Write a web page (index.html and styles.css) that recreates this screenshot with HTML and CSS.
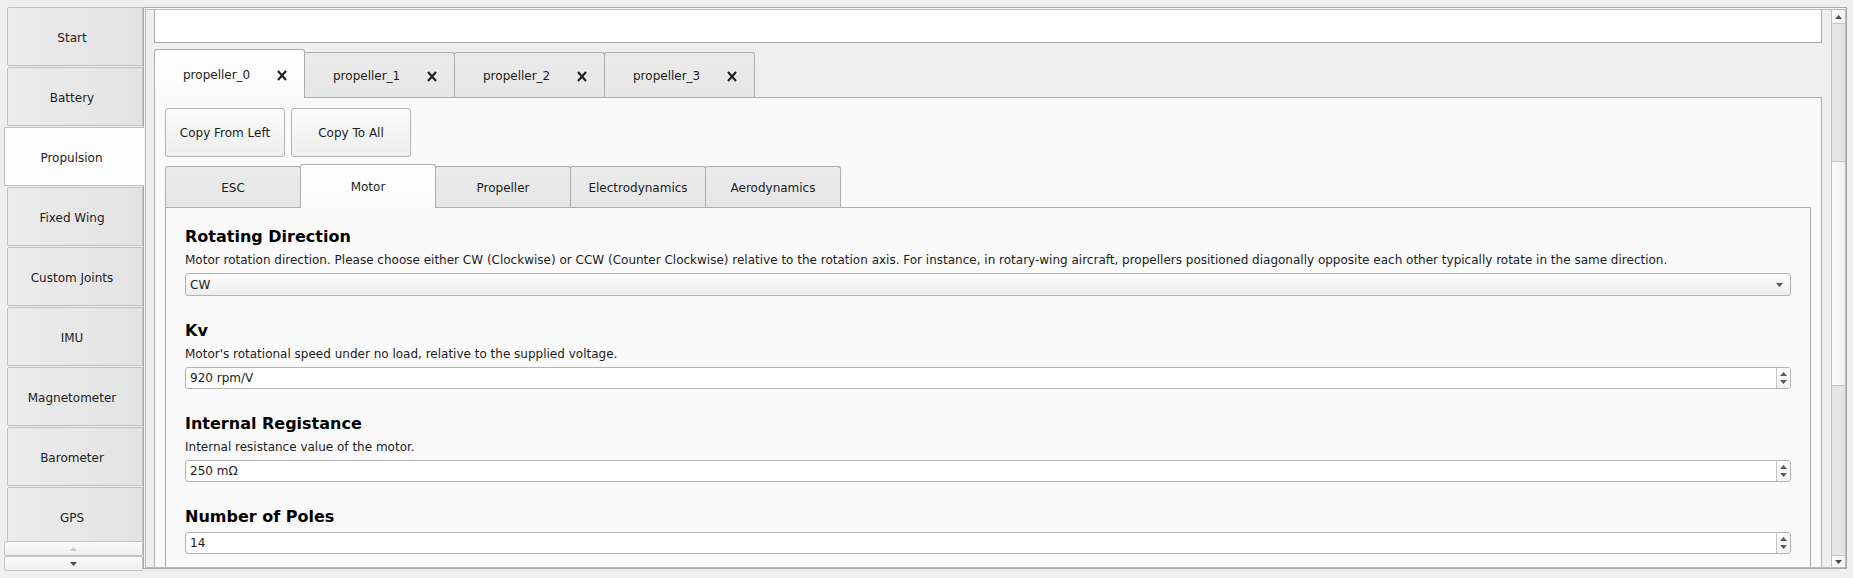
FILE: index.html
```html
<!DOCTYPE html>
<html lang="en">
<head>
<meta charset="utf-8">
<title>Propulsion</title>
<link rel="stylesheet" href="styles.css">
</head>
<body>
<div class="app">
  <nav class="side">
    <div class="side-tabs">
      <div class="stab">Start</div>
      <div class="stab">Battery</div>
      <div class="stab active">Propulsion</div>
      <div class="stab">Fixed Wing</div>
      <div class="stab">Custom Joints</div>
      <div class="stab">IMU</div>
      <div class="stab">Magnetometer</div>
      <div class="stab">Barometer</div>
      <div class="stab">GPS</div>
    </div>
    <div class="side-scroll"><svg width="7" height="4" viewBox="0 0 7 4"><path d="M0 4 L3.5 0 L7 4 Z" fill="#c9c9c9"/></svg></div>
    <div class="side-scroll"><svg width="7" height="4" viewBox="0 0 7 4"><path d="M0 0 L7 0 L3.5 4 Z" fill="#4a4a4a"/></svg></div>
  </nav>
  <main class="frame">
    <div class="frame-inner">
      <div class="viewport">
        <div class="content">
          <div class="namebox"></div>
          <div class="tabbar">
            <div class="tab active"><span>propeller_0</span><svg class="close" width="10" height="11" viewBox="0 0 10 11"><path d="M1 1 L9 10 M9 1 L1 10" stroke="#1f1f1f" stroke-width="2.1" fill="none"/></svg></div>
            <div class="tab"><span>propeller_1</span><svg class="close" width="10" height="11" viewBox="0 0 10 11"><path d="M1 1 L9 10 M9 1 L1 10" stroke="#1f1f1f" stroke-width="2.1" fill="none"/></svg></div>
            <div class="tab"><span>propeller_2</span><svg class="close" width="10" height="11" viewBox="0 0 10 11"><path d="M1 1 L9 10 M9 1 L1 10" stroke="#1f1f1f" stroke-width="2.1" fill="none"/></svg></div>
            <div class="tab"><span>propeller_3</span><svg class="close" width="10" height="11" viewBox="0 0 10 11"><path d="M1 1 L9 10 M9 1 L1 10" stroke="#1f1f1f" stroke-width="2.1" fill="none"/></svg></div>
          </div>
          <div class="pane">
            <div class="btnrow">
              <button class="btn" type="button">Copy From Left</button>
              <button class="btn" type="button">Copy To All</button>
            </div>
            <div class="subtabbar">
              <div class="subtab">ESC</div>
              <div class="subtab active">Motor</div>
              <div class="subtab">Propeller</div>
              <div class="subtab">Electrodynamics</div>
              <div class="subtab">Aerodynamics</div>
            </div>
            <div class="subpane">
              <section class="field">
                <h2 class="field-title">Rotating Direction</h2>
                <p class="field-desc">Motor rotation direction. Please choose either CW (Clockwise) or CCW (Counter Clockwise) relative to the rotation axis. For instance, in rotary-wing aircraft, propellers positioned diagonally opposite each other typically rotate in the same direction.</p>
                <div class="combo"><span>CW</span><svg width="7" height="4" viewBox="0 0 7 4"><path d="M0 0 L7 0 L3.5 4 Z" fill="#555"/></svg></div>
              </section>
              <section class="field">
                <h2 class="field-title">Kv</h2>
                <p class="field-desc">Motor's rotational speed under no load, relative to the supplied voltage.</p>
                <div class="spin"><span class="spin-val">920 rpm/V</span><div class="spin-btns"><svg width="7" height="4" viewBox="0 0 7 4"><path d="M0 4 L3.5 0 L7 4 Z" fill="#5a5a5a"/></svg><svg width="7" height="4" viewBox="0 0 7 4"><path d="M0 0 L7 0 L3.5 4 Z" fill="#5a5a5a"/></svg></div></div>
              </section>
              <section class="field">
                <h2 class="field-title">Internal Registance</h2>
                <p class="field-desc">Internal resistance value of the motor.</p>
                <div class="spin"><span class="spin-val">250 mΩ</span><div class="spin-btns"><svg width="7" height="4" viewBox="0 0 7 4"><path d="M0 4 L3.5 0 L7 4 Z" fill="#5a5a5a"/></svg><svg width="7" height="4" viewBox="0 0 7 4"><path d="M0 0 L7 0 L3.5 4 Z" fill="#5a5a5a"/></svg></div></div>
              </section>
              <section class="field">
                <h2 class="field-title nodesc">Number of Poles</h2>
                <div class="spin"><span class="spin-val">14</span><div class="spin-btns"><svg width="7" height="4" viewBox="0 0 7 4"><path d="M0 4 L3.5 0 L7 4 Z" fill="#5a5a5a"/></svg><svg width="7" height="4" viewBox="0 0 7 4"><path d="M0 0 L7 0 L3.5 4 Z" fill="#5a5a5a"/></svg></div></div>
              </section>
            </div>
          </div>
        </div>
      </div>
      <div class="vscroll">
        <div class="sb-btn up"><svg width="7" height="4" viewBox="0 0 7 4"><path d="M0 4 L3.5 0 L7 4 Z" fill="#4a4a4a"/></svg></div>
        <div class="sb-track"><div class="sb-handle"></div></div>
        <div class="sb-btn down"><svg width="7" height="4" viewBox="0 0 7 4"><path d="M0 0 L7 0 L3.5 4 Z" fill="#4a4a4a"/></svg></div>
      </div>
    </div>
  </main>
</div>
</body>
</html>
```

FILE: styles.css
```css
* { box-sizing: border-box; }
html, body { margin: 0; padding: 0; }
body {
  background: #efefef;
  font-family: "DejaVu Sans", "Noto Sans", sans-serif;
  font-size: 12px;
  color: #1c1c1c;
  overflow: hidden;
  width: 1853px;
  height: 578px;
}
.app {
  display: flex;
  align-items: flex-start;
  padding: 7px 6px 0 4px;
  height: 578px;
}

/* ---------- sidebar ---------- */
.side {
  width: 140px;
  margin-right: -1px;
  flex: none;
  display: flex;
  flex-direction: column;
  position: relative;
  z-index: 2;
}
.side-tabs {
  height: 534px;
  overflow: hidden;
  display: flex;
  flex-direction: column;
  gap: 1px;
}
.stab {
  flex: none;
  height: 59px;
  width: 136px;
  margin-left: 3px;
  display: flex;
  align-items: center;
  justify-content: center;
  padding: 2px 6px 0 0;
  border: 1px solid #c0c0c0;
  border-radius: 2px 0 0 2px;
  background: linear-gradient(to right, #ececec, #e3e3e3);
  color: #1c1c1c;
}
.stab.active {
  width: 140px;
  margin-left: 0;
  border-right: none;
  padding-right: 6px;
  background: #fcfcfc;
}
.side-scroll {
  width: 139px;
  height: 15px;
  border: 1px solid #c4c4c4;
  border-radius: 2px;
  background: linear-gradient(#fafafa, #f0f0f0);
  display: flex;
  align-items: center;
  justify-content: center;
}

/* ---------- main frame ---------- */
.frame {
  flex: 1;
  height: 562px;
  border: 1px solid #a9a9a9;
  padding: 1px 0 0 1px;
  background: #f6f6f6;
}
.frame-inner {
  height: 100%;
  border: 1px solid #b9b9b9;
  display: flex;
  background: #efefef;
}
.viewport {
  flex: 1;
  overflow: hidden;
}
.content {
  padding: 0 9px 0 8px;
}
.namebox {
  height: 43px;
  margin-top: -10px;
  background: #ffffff;
  border: 1px solid #adadad;
}

/* ---------- outer tabs ---------- */
.tabbar {
  display: flex;
  align-items: flex-end;
  height: 48px;
  margin-top: 6px;
}
.tab {
  width: 151px;
  margin-right: -1px;
  height: 45px;
  display: flex;
  align-items: center;
  justify-content: space-between;
  padding: 2px 17px 0 28px;
  border: 1px solid #adadad;
  border-bottom: none;
  border-radius: 3px 3px 0 0;
  background: linear-gradient(#ebebeb, #e6e6e6);
}
.tab.active {
  height: 49px;
  margin-bottom: -1px;
  padding-top: 2px;
  position: relative;
  z-index: 1;
  background: linear-gradient(#ffffff, #fafafa);
}
.close { flex: none; }

.pane {
  border: 1px solid #adadad;
  background: #fafafa;
  padding: 10px 10px 0;
  height: 600px;
}
.btnrow {
  display: flex;
  gap: 6px;
}
.btn {
  width: 120px;
  height: 49px;
  border: 1px solid #b3b3b3;
  border-radius: 3px;
  background: linear-gradient(#fbfbfb, #eeeeee);
  font-family: inherit;
  font-size: 12px;
  color: #1c1c1c;
  padding: 0;
}

/* ---------- sub tabs ---------- */
.subtabbar {
  display: flex;
  align-items: flex-end;
  height: 43px;
  margin-top: 7px;
}
.subtab {
  width: 136px;
  margin-right: -1px;
  height: 41px;
  display: flex;
  align-items: center;
  justify-content: center;
  padding-top: 1px;
  border: 1px solid #adadad;
  border-bottom: none;
  border-radius: 3px 3px 0 0;
  background: linear-gradient(#ebebeb, #e6e6e6);
}
.subtab.active {
  height: 44px;
  margin-bottom: -1px;
  position: relative;
  z-index: 1;
  background: linear-gradient(#ffffff, #fafafa);
}
.subpane {
  border: 1px solid #adadad;
  background: #fafafa;
  padding: 19px 19px 0;
  height: 500px;
}

/* ---------- fields ---------- */
.field { margin-bottom: 25px; }
.field-title {
  margin: 0 0 7px;
  font-size: 16px;
  line-height: 19px;
  font-weight: bold;
  color: #000;
}
.field-title.nodesc { margin-bottom: 6px; }
.field-desc {
  margin: 0 0 6px;
  line-height: 14px;
  white-space: nowrap;
  color: #1c1c1c;
}
.combo {
  height: 23px;
  border: 1px solid #b3b3b3;
  border-radius: 3px;
  background: linear-gradient(#fdfdfd, #ededed);
  display: flex;
  align-items: center;
  justify-content: space-between;
  padding: 0 7px 0 4px;
}
.spin {
  height: 22px;
  border: 1px solid #b3b3b3;
  border-radius: 3px;
  background: #ffffff;
  display: flex;
  align-items: stretch;
}
.spin-val {
  flex: 1;
  display: flex;
  align-items: center;
  padding-left: 4px;
}
.spin-btns {
  width: 14px;
  border-left: 1px solid #c4c4c4;
  display: flex;
  flex-direction: column;
  align-items: center;
  justify-content: center;
  gap: 4px;
  background: linear-gradient(#fcfcfc, #f1f1f1);
  border-radius: 0 2px 2px 0;
}

/* ---------- vertical scrollbar ---------- */
.vscroll {
  width: 14px;
  flex: none;
  display: flex;
  flex-direction: column;
  border-left: 1px solid #c2c2c2;
  background: #e5e5e5;
}
.sb-btn {
  display: flex;
  align-items: center;
  justify-content: center;
  background: linear-gradient(to right, #fdfdfd, #f1f1f1);
}
.sb-btn.up { height: 14px; border-bottom: 1px solid #c6c6c6; }
.sb-btn.down { height: 12px; border-top: 1px solid #c6c6c6; }
.sb-track { flex: 1; }
.sb-handle {
  margin-top: 137px;
  height: 225px;
  border-top: 1px solid #c6c6c6;
  border-bottom: 1px solid #c6c6c6;
  background: linear-gradient(to right, #fdfdfd, #f0f0f0);
}
```
